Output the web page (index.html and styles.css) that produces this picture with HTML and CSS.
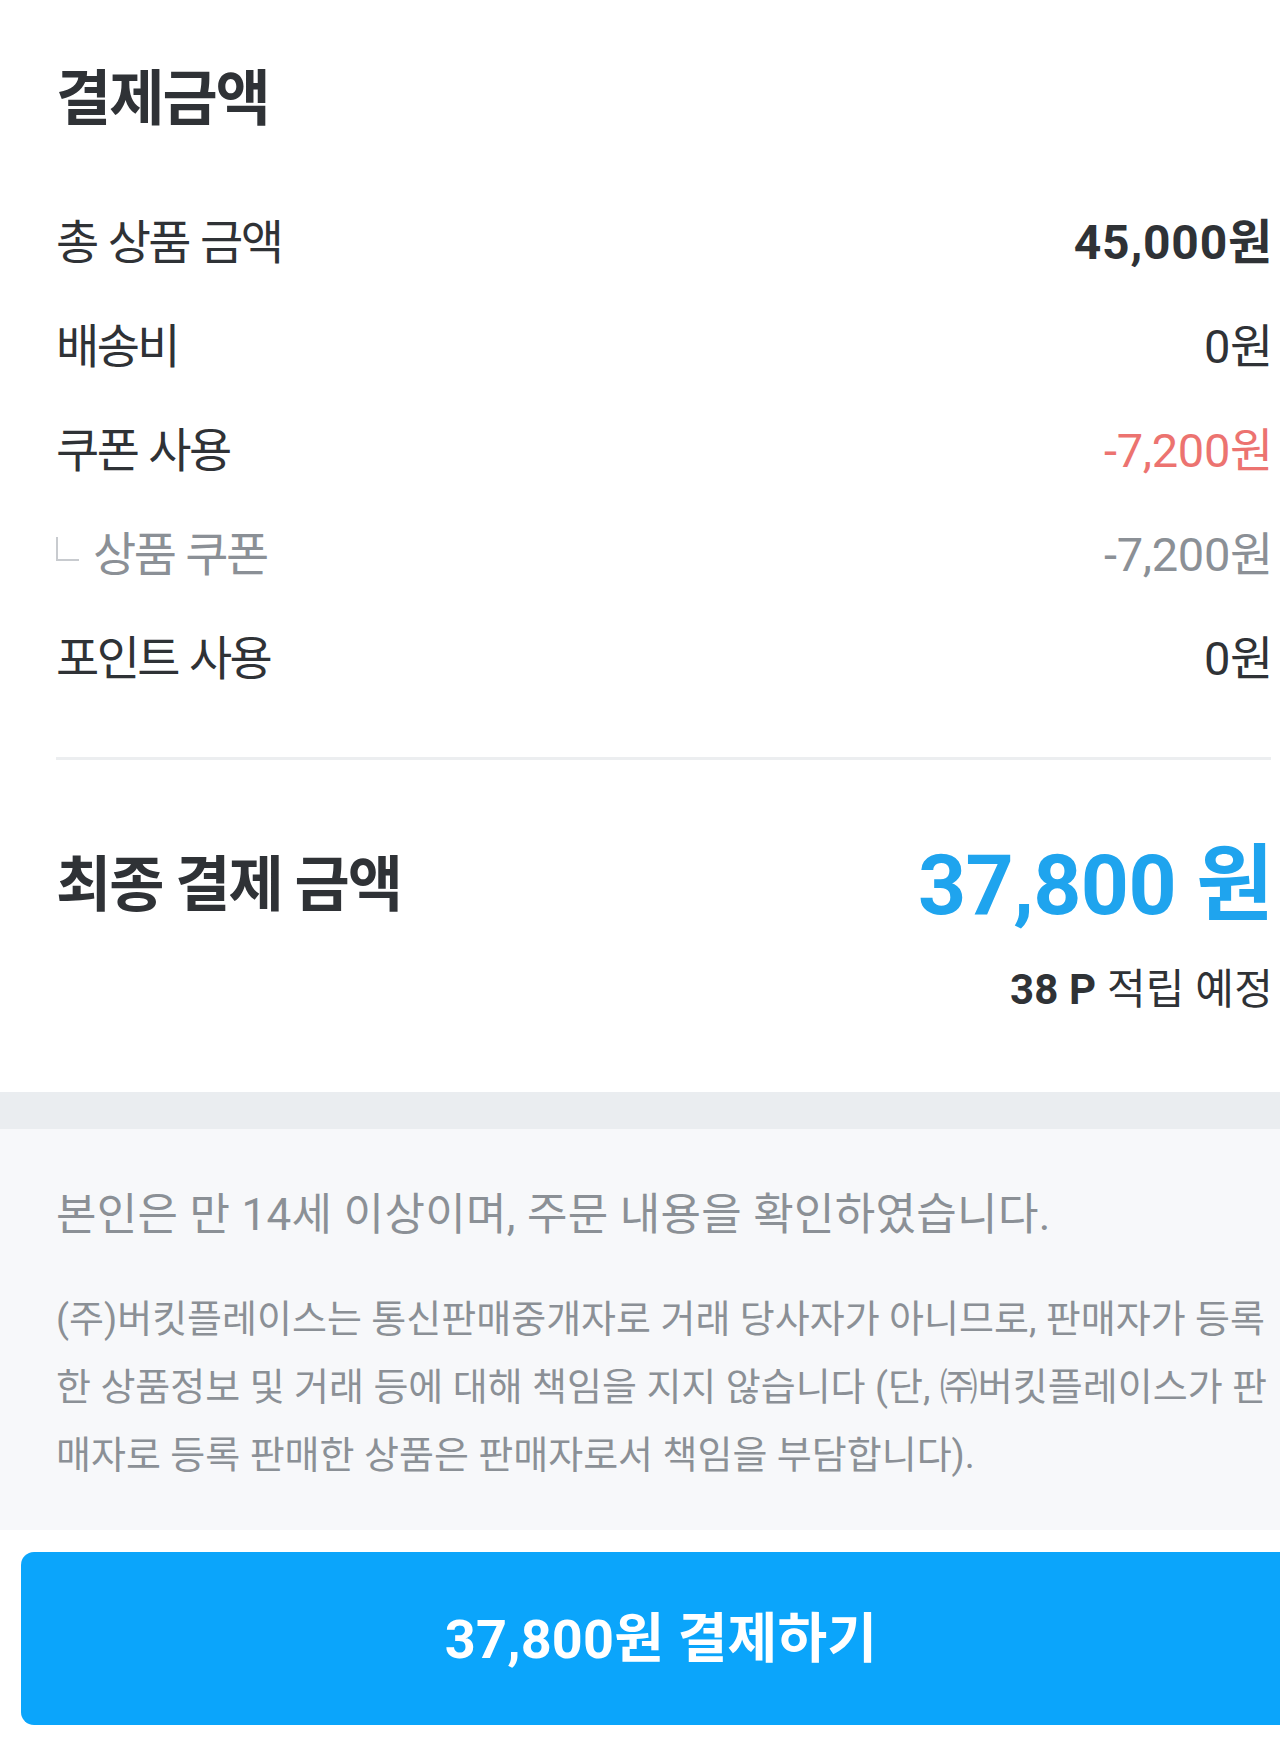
FILE: index.html
```html
<!DOCTYPE html>
<html lang="ko">
<head>
<meta charset="utf-8">
<title>결제금액</title>
<link rel="stylesheet" href="styles.css">
</head>
<body>
<main class="page">
  <section class="summary">
    <h2 class="title">결제금액</h2>
    <div class="rows">
      <div class="row">
        <span class="label">총 상품 금액</span>
        <span class="value value-bold">45,000원</span>
      </div>
      <div class="row">
        <span class="label">배송비</span>
        <span class="value">0원</span>
      </div>
      <div class="row">
        <span class="label">쿠폰 사용</span>
        <span class="value value-red">-7,200원</span>
      </div>
      <div class="row row-sub">
        <span class="label label-sub"><span class="corner"></span>상품 쿠폰</span>
        <span class="value value-gray">-7,200원</span>
      </div>
      <div class="row">
        <span class="label">포인트 사용</span>
        <span class="value">0원</span>
      </div>
    </div>
    <div class="divider"></div>
    <div class="total">
      <span class="total-label">최종 결제 금액</span>
      <span class="total-value">37,800 원</span>
    </div>
    <div class="points"><b class="points-num">38 P</b> 적립 예정</div>
  </section>
  <div class="band"></div>
  <section class="notice">
    <p class="agree">본인은 만 14세 이상이며, 주문 내용을 확인하였습니다.</p>
    <p class="legal">
      <span class="legal-line">(주)버킷플레이스는 통신판매중개자로 거래 당사자가 아니므로, 판매자가 등록</span>
      <span class="legal-line">한 상품정보 및 거래 등에 대해 책임을 지지 않습니다 (단, ㈜버킷플레이스가 판</span>
      <span class="legal-line">매자로 등록 판매한 상품은 판매자로서 책임을 부담합니다).</span>
    </p>
  </section>
  <div class="cta-wrap">
    <button class="cta" type="button">37,800원 결제하기</button>
  </div>
</main>
</body>
</html>
```
FILE: styles.css
```css
* { box-sizing: border-box; }
html, body {
  margin: 0;
  padding: 0;
  background: #ffffff;
}
body {
  width: 1280px;
  overflow-x: hidden;
  font-family: "Roboto", "Noto Sans CJK KR", sans-serif;
  color: #2f3236;
}
.page {
  width: 1280px;
  overflow: hidden;
}
.summary {
  padding: 64px 7px 77px 56px;
}
.title {
  margin: 0;
  height: 72px;
  line-height: 72px;
  font-size: 60px;
  font-weight: 700;
  letter-spacing: -2px;
}
.rows {
  margin-top: 55px;
  display: flex;
  flex-direction: column;
}
.row {
  height: 104px;
  display: flex;
  align-items: center;
  justify-content: space-between;
}
.label {
  font-size: 47px;
  letter-spacing: -2.6px;
  word-spacing: 2px;
  line-height: 60px;
  display: flex;
  align-items: center;
  white-space: pre;
}
.label-sub {
  color: #8b9096;
}
.corner {
  width: 23px;
  height: 24px;
  border-left: 2px solid #c8cbcf;
  border-bottom: 2px solid #c8cbcf;
  margin-right: 14px;
  margin-bottom: 13px;
}
.value {
  font-size: 47px;
  line-height: 60px;
  letter-spacing: -0.3px;
}
.value-bold {
  font-size: 48px;
  font-weight: 700;
  letter-spacing: 0.8px;
}
.value-red { color: #ec7370; }
.value-gray { color: #8b9096; }
.divider {
  margin-top: 46px;
  height: 3px;
  margin-right: 2px;
  background: #eceef0;
}
.total {
  margin-top: 76px;
  height: 100px;
  display: flex;
  align-items: center;
  justify-content: space-between;
}
.total-label {
  font-size: 60px;
  font-weight: 700;
  letter-spacing: -2px;
  line-height: 72px;
  white-space: pre;
}
.total-value {
  font-size: 84px;
  font-weight: 700;
  color: #1fa4ee;
  line-height: 100px;
  letter-spacing: -0.6px;
}
.points {
  margin-top: 29px;
  height: 50px;
  line-height: 50px;
  text-align: right;
  font-size: 42px;
  letter-spacing: 0.2px;
  white-space: pre;
}
.points-num {
  font-weight: 700;
}
.band {
  height: 37px;
  background: #eaedf0;
}
.notice {
  background: #f7f8fa;
  padding: 56px 10px 41px 56px;
  color: #8b9096;
}
.agree {
  margin: 0;
  height: 60px;
  line-height: 60px;
  font-size: 44px;
  letter-spacing: 0.3px;
  white-space: nowrap;
}
.legal {
  margin: 40px 0 0;
  font-size: 38px;
  line-height: 68px;
  letter-spacing: 0;
}
.legal-line {
  display: block;
  white-space: nowrap;
}
.cta-wrap {
  padding: 22px 0 18px 21px;
  overflow: hidden;
}
.cta {
  display: block;
  width: 1280px;
  height: 173px;
  border: 0;
  border-radius: 13px;
  background: #0ba5fb;
  color: #ffffff;
  font-family: "Roboto", "Noto Sans CJK KR", sans-serif;
  font-size: 54px;
  font-weight: 700;
  letter-spacing: 0.2px;
  padding: 0 0 9px;
}
```
